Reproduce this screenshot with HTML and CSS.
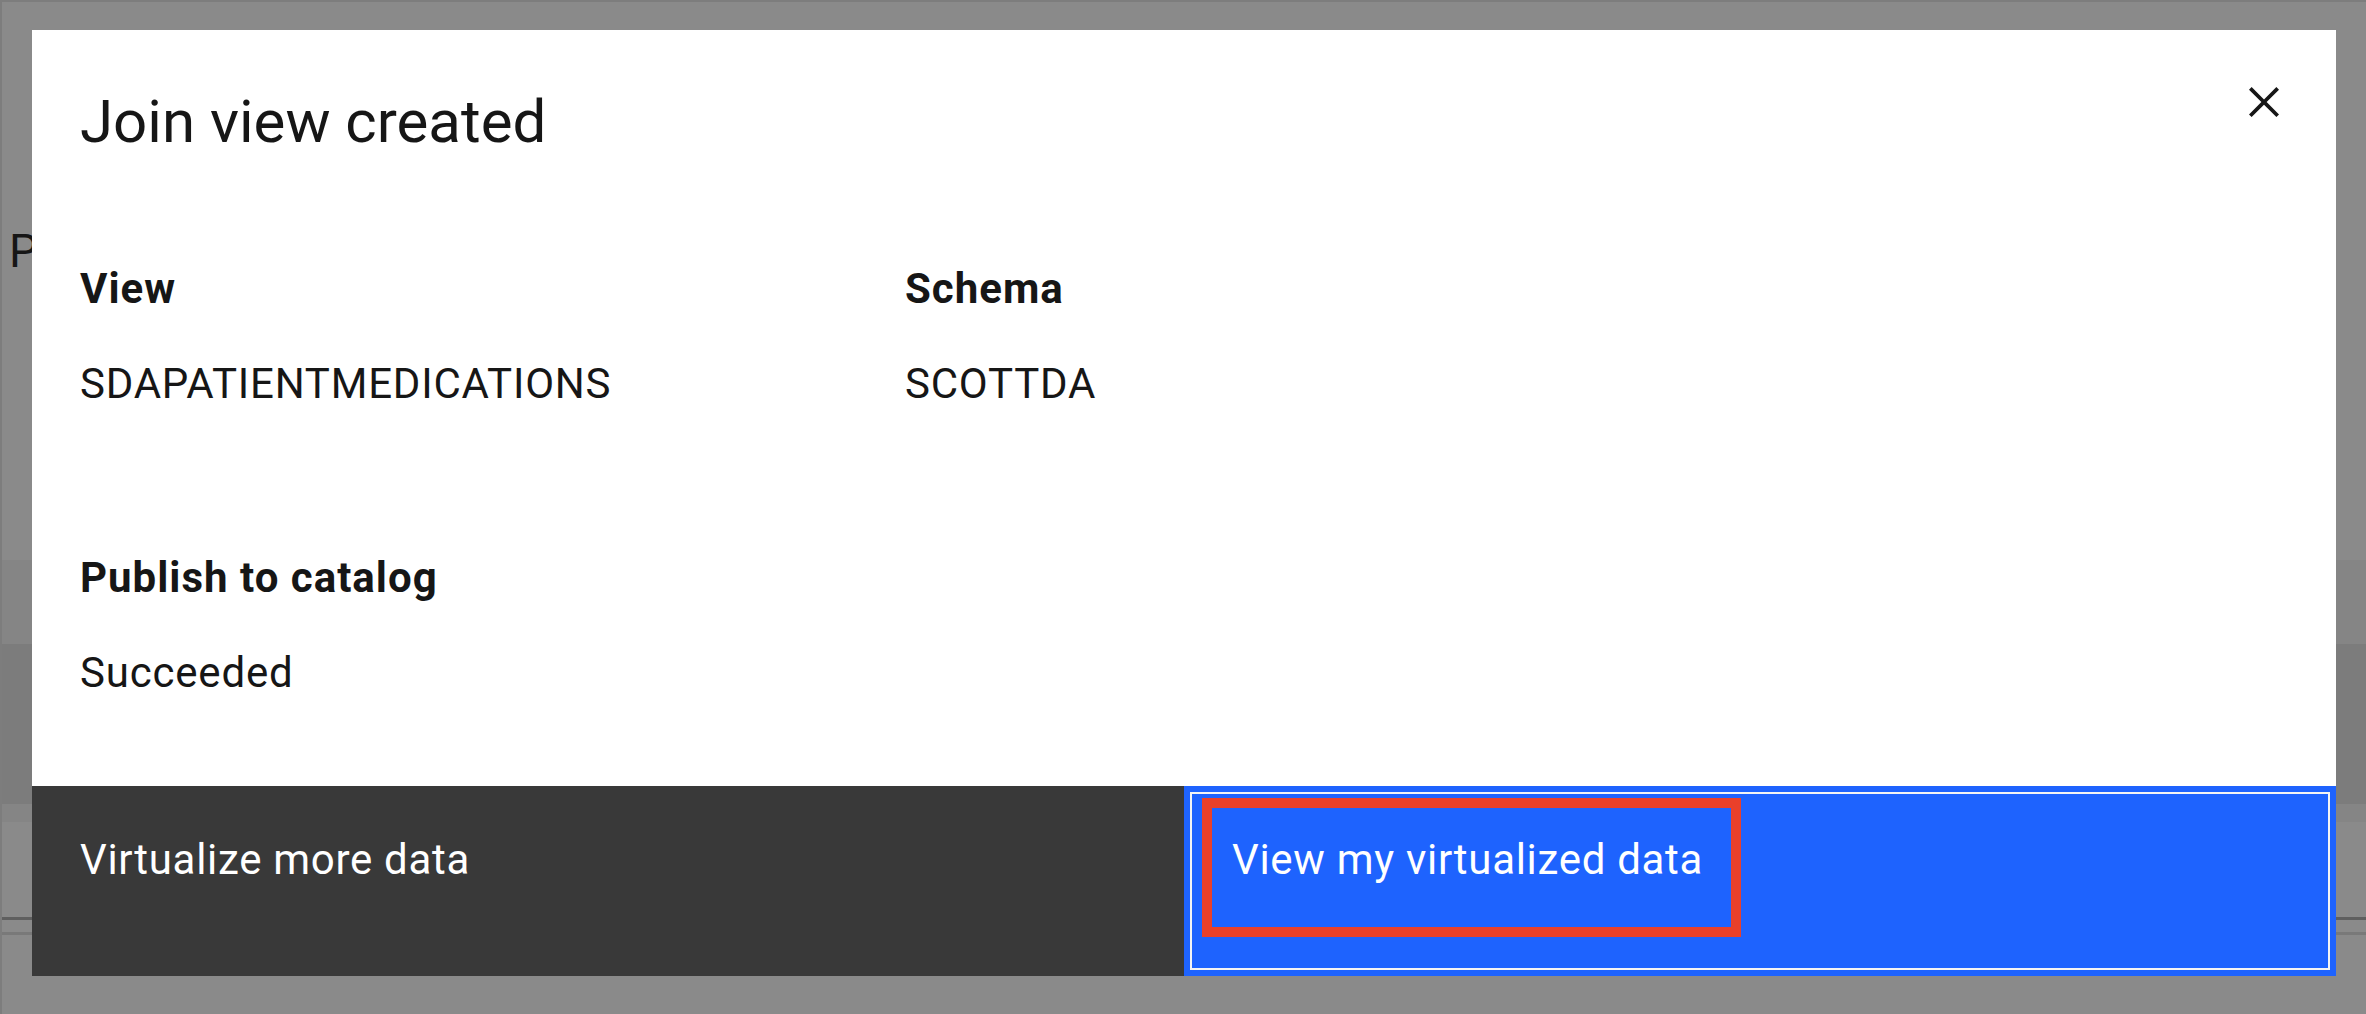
FILE: index.html
```html
<!DOCTYPE html>
<html lang="en">
<head>
<meta charset="utf-8">
<title>Join view created</title>
<link rel="stylesheet" href="styles.css">
</head>
<body>
<div class="page">
  <div class="page-top"></div>
  <div class="page-main">
    <div class="page-head"><h1 class="page-title">P</h1></div>
    <div class="band band-light"></div>
    <div class="band band-mid"></div>
    <div class="band band-thin"></div>
    <div class="band band-rest">
      <div class="rule rule-dark"></div>
      <div class="rule rule-soft"></div>
    </div>
  </div>
</div>

<div class="overlay">
  <div class="modal" role="dialog" aria-labelledby="modal-title">
    <div class="modal-header">
      <h2 class="modal-title" id="modal-title">Join view created</h2>
      <button class="close-btn" aria-label="Close">
        <svg class="close-icon" viewBox="0 0 32 32" aria-hidden="true">
          <path d="M24 9.4L22.6 8 16 14.6 9.4 8 8 9.4 14.6 16 8 22.6 9.4 24 16 17.4 22.6 24 24 22.6 17.4 16 24 9.4z"/>
        </svg>
      </button>
    </div>
    <div class="modal-body">
      <div class="info-grid">
        <div class="field">
          <div class="label">View</div>
          <div class="value">SDAPATIENTMEDICATIONS</div>
        </div>
        <div class="field">
          <div class="label">Schema</div>
          <div class="value">SCOTTDA</div>
        </div>
        <div class="field field-wide">
          <div class="label">Publish to catalog</div>
          <div class="value">Succeeded</div>
        </div>
      </div>
    </div>
    <div class="modal-footer">
      <button class="btn btn-secondary">Virtualize more data</button>
      <button class="btn btn-primary">View my virtualized data<span class="highlight"></span></button>
    </div>
  </div>
</div>
</body>
</html>
```

FILE: styles.css
```css
* {
  box-sizing: border-box;
}

html, body {
  margin: 0;
  padding: 0;
  width: 2366px;
  height: 1014px;
  overflow: hidden;
  background: #ffffff;
  font-family: Roboto, "Liberation Sans", Arial, sans-serif;
  color: #161616;
}

/* ---------- background page (under the overlay) ---------- */
.page {
  width: 2366px;
  height: 1014px;
  display: flex;
  flex-direction: column;
  border-left: 2px solid #e4e4e4;
}

.page-top {
  height: 2px;
  background: #e4e4e4;
}

.page-main {
  flex: 1;
  display: flex;
  flex-direction: column;
}

.page-head {
  height: 558px;
  padding: 226px 0 0 7px;
}

.page-title {
  margin: 0;
  font-size: 46px;
  font-weight: 400;
  line-height: 46px;
  color: #161616;
}

.band-light {
  height: 84px;
  background: #f4f4f4;
}

.band-mid {
  height: 160px;
  background: #e2e2e2;
}

.band-thin {
  height: 18px;
  background: #f4f4f4;
}

.band-rest {
  flex: 1;
  padding-top: 95px;
  display: flex;
  flex-direction: column;
  gap: 12px;
}

.rule {
  height: 3px;
}

.rule-dark {
  background: #a8a8a8;
}

.rule-soft {
  background: #dcdcdc;
}

/* ---------- overlay & modal ---------- */
.overlay {
  position: fixed;
  inset: 0;
  background: rgba(22, 22, 22, 0.5);
  display: flex;
  align-items: flex-start;
  justify-content: flex-start;
  padding: 30px 0 0 32px;
}

.modal {
  width: 2304px;
  height: 946px;
  background: #ffffff;
  display: flex;
  flex-direction: column;
}

.modal-header {
  display: flex;
  justify-content: space-between;
  align-items: flex-start;
  padding-left: 48px;
}

.modal-title {
  margin: 50px 0 0 0;
  font-size: 60px;
  line-height: 84px;
  font-weight: 400;
  color: #161616;
}

.close-btn {
  width: 144px;
  height: 144px;
  border: 0;
  padding: 0;
  margin: 0;
  background: transparent;
  display: flex;
  align-items: center;
  justify-content: center;
  cursor: pointer;
}

.close-icon {
  width: 60px;
  height: 60px;
  fill: #161616;
}

.modal-body {
  flex: 1;
  padding: 0 48px;
}

.info-grid {
  display: grid;
  grid-template-columns: 825px 1fr;
  row-gap: 140px;
  padding-top: 88px;
}

.field-wide {
  grid-column: 1 / -1;
}

.label {
  font-size: 42px;
  line-height: 54px;
  font-weight: 700;
  letter-spacing: 1px;
  color: #161616;
  margin-bottom: 41px;
}

.value {
  font-size: 42px;
  line-height: 54px;
  font-weight: 400;
  letter-spacing: 0.8px;
  color: #161616;
}

/* ---------- footer ---------- */
.modal-footer {
  height: 190px;
  display: grid;
  grid-template-columns: 1fr 1fr;
}

.btn {
  position: relative;
  border: 0;
  margin: 0;
  padding: 47px 48px 0 48px;
  text-align: left;
  display: flex;
  align-items: flex-start;
  font-family: Roboto, "Liberation Sans", Arial, sans-serif;
  font-size: 42px;
  line-height: 54px;
  font-weight: 400;
  letter-spacing: 0.7px;
  color: #ffffff;
  cursor: pointer;
}

.btn-secondary {
  background: #393939;
}

.btn-primary {
  background: #1e63fe;
  box-shadow: inset 0 0 0 6px #1e63fe, inset 0 0 0 8px #f4f4f4;
}

/* annotation box drawn over the primary button */
.highlight {
  position: absolute;
  left: 18px;
  top: 12px;
  width: 539px;
  height: 139px;
  border: 10px solid #e9402a;
  pointer-events: none;
}
```
